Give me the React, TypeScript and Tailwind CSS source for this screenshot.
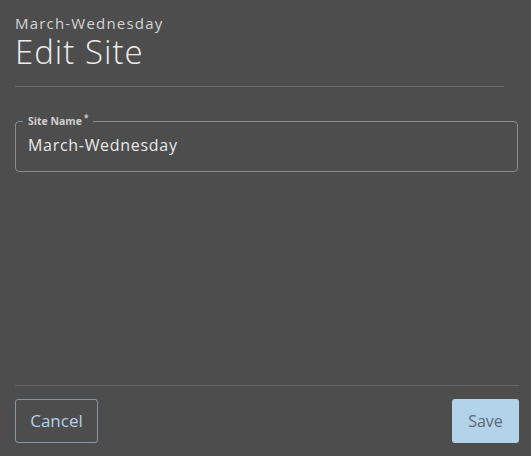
import React from "react";

export default function App() {
  return (
    <div className="w-[531px] h-[456px] bg-[#4d4d4d] flex flex-col font-['Open_Sans',sans-serif] text-[#e6e6e6] overflow-hidden">
      <header className="px-[15px] pt-[13px]">
        <div className="text-[15px] leading-[20px] tracking-[1.2px] text-[#d4d4d4]">March-Wednesday</div>
        <h1 className="text-[33px] leading-[38px] tracking-[1px] text-[#ececec] font-light">Edit Site</h1>
        <div className="mt-[15px] mr-[12px] border-b border-[#6a6a6a]" />
      </header>

      <main className="flex-1 px-[15px] pt-[28px] pr-[13px]">
        <fieldset className="border border-[#8c8c8c] rounded-[4px] px-[12px] pb-[15px] m-0">
          <legend className="px-[5px] -ml-[5px] text-[10.5px] font-bold text-[#cfcfcf] leading-[12px]">
            Site Name<sup className="text-[8px] ml-[2px]">*</sup>
          </legend>
          <div className="text-[16px] leading-[22px] tracking-[0.7px] text-[#e8e8e8] mt-[7px]">March-Wednesday</div>
        </fieldset>
      </main>

      <footer className="px-[15px] pr-[12px] pb-[13px]">
        <div className="border-t border-[#666666]" />
        <div className="flex justify-between items-center mt-[13px]">
          <button className="h-[44px] w-[83px] rounded-[3px] border border-[#8a97a3] text-[#b1d2ea] text-[17px]">
            Cancel
          </button>
          <button className="h-[44px] w-[67px] rounded-[3px] bg-[#b3d3e9] text-[#5e6872] text-[16px]">
            Save
          </button>
        </div>
      </footer>
    </div>
  );
}
